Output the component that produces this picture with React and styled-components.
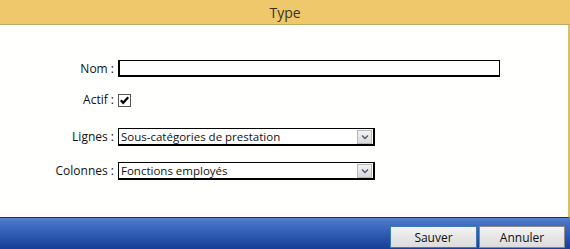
import React from "react";
import styled, { createGlobalStyle } from "styled-components";

const GlobalStyle = createGlobalStyle`
  html, body { margin: 0; padding: 0; background: #ffffff; }
  body { font-family: "DejaVu Sans", "Liberation Sans", sans-serif; }
`;

const App = () => {
  return (
    <Window>
      <GlobalStyle />
      <TitleBar>Type</TitleBar>
      <Body>
        <Form>
          <Row top={35}>
            <Label>Nom :</Label>
            <TextInput defaultValue="" />
          </Row>
          <Row top={16}>
            <Label>Actif :</Label>
            <CheckBox>
              <svg width="11" height="11" viewBox="0 0 11 11">
                <path d="M1.8 5.2 L4.2 7.8 L9.2 2.2" fill="none" stroke="#000" strokeWidth="2.2" />
              </svg>
            </CheckBox>
          </Row>
          <Row top={21}>
            <Label>Lignes :</Label>
            <Select>
              <SelectText>Sous-catégories de prestation</SelectText>
              <Arrow>
                <svg width="8" height="6" viewBox="0 0 8 6">
                  <path d="M1 1.5 L4 4.5 L7 1.5" fill="none" stroke="#4a5a70" strokeWidth="1.4" />
                </svg>
              </Arrow>
            </Select>
          </Row>
          <Row top={16}>
            <Label>Colonnes :</Label>
            <Select>
              <SelectText>Fonctions employés</SelectText>
              <Arrow>
                <svg width="8" height="6" viewBox="0 0 8 6">
                  <path d="M1 1.5 L4 4.5 L7 1.5" fill="none" stroke="#4a5a70" strokeWidth="1.4" />
                </svg>
              </Arrow>
            </Select>
          </Row>
        </Form>
      </Body>
      <Footer>
        <Button primary>Sauver</Button>
        <Button>Annuler</Button>
      </Footer>
    </Window>
  );
};

export default App;

const Window = styled.div`
  width: 570px;
  height: 249px;
  display: flex;
  flex-direction: column;
  overflow: hidden;
`;

const TitleBar = styled.div`
  height: 24px;
  background: #efc86b;
  border-bottom: 1px solid #c2a864;
  display: flex;
  align-items: center;
  justify-content: center;
  font-family: "Open Sans", "DejaVu Sans", sans-serif;
  font-size: 14px;
  color: #3a3420;
`;

const Body = styled.div`
  flex: 1;
  background: #fffffd;
  border-right: 2px solid #dcbd6a;
  border-bottom: 1px solid #15305c;
`;

const Form = styled.div`
  display: flex;
  flex-direction: column;
`;

const Row = styled.div`
  display: flex;
  align-items: center;
  margin-top: ${(p) => p.top}px;
`;

const Label = styled.div`
  width: 114px;
  margin-right: 4px;
  text-align: right;
  font-family: "Open Sans", "DejaVu Sans", sans-serif;
  font-size: 12px;
  color: #111;
  line-height: 14px;
`;

const TextInput = styled.input`
  box-sizing: border-box;
  width: 382px;
  height: 17px;
  border: 1px solid #000;
  border-width: 1px 1px 2px 2px;
  padding: 0;
  outline: none;
  background: #fff;
`;

const CheckBox = styled.div`
  box-sizing: border-box;
  width: 13px;
  height: 13px;
  border: 1px solid #555;
  background: #fff;
  display: flex;
  align-items: center;
  justify-content: center;
`;

const Select = styled.div`
  box-sizing: border-box;
  width: 257px;
  height: 18px;
  border: 1px solid #000;
  border-width: 1px 2px 2px 1px;
  display: flex;
  align-items: center;
  justify-content: space-between;
  background: #fff;
`;

const SelectText = styled.span`
  font-family: "Open Sans", "DejaVu Sans", sans-serif;
  font-size: 11.5px;
  color: #111;
  padding-left: 2px;
  line-height: 14px;
`;

const Arrow = styled.div`
  box-sizing: border-box;
  width: 15px;
  height: 14px;
  margin-right: 1px;
  background: linear-gradient(#f3f3f3, #d9d9d9);
  border: 1px solid #b8b8b8;
  display: flex;
  align-items: center;
  justify-content: center;
`;

const Footer = styled.div`
  height: 31px;
  background: linear-gradient(#5b83cf 0px, #4673c6 4px, #2c58b0 18px, #173d95 31px);
  display: flex;
  justify-content: flex-end;
  align-items: flex-start;
  gap: 2px;
  padding: 8px 5px 0 0;
  box-sizing: border-box;
`;

const Button = styled.button`
  box-sizing: border-box;
  width: ${(p) => (p.primary ? "87px" : "86px")};
  height: 22px;
  padding: 0;
  background: linear-gradient(#f4f4f4, #e6e6e6 50%, #dcdcdc);
  border: 1px solid ${(p) => (p.primary ? "#3d7bb8" : "#8a8a8a")};
  font-family: "Open Sans", "DejaVu Sans", sans-serif;
  font-size: 12px;
  color: #111;
`;
